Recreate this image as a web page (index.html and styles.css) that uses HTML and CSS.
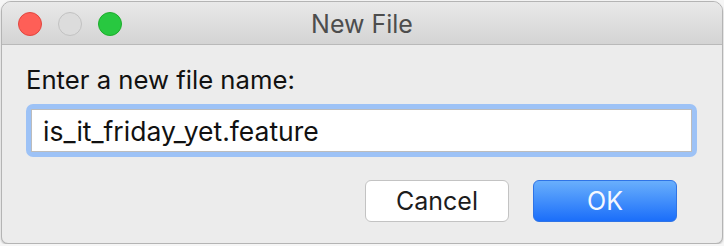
FILE: index.html
```html
<!DOCTYPE html>
<html lang="en">
<head>
    <meta charset="UTF-8">
    <meta name="viewport" content="width=device-width, initial-scale=1.0">
    <title>New File</title>
    <link rel="stylesheet" href="styles.css">
</head>
<body>
    <div class="window">
        <div class="titlebar">
            <div class="lights">
                <span class="light close"></span>
                <span class="light minimize"></span>
                <span class="light zoom"></span>
            </div>
            <div class="title">New File</div>
            <div></div>
        </div>
        <div class="content">
            <label for="fileName" class="prompt">Enter a new file name:</label>
            <div class="field">
                <input type="text" id="fileName" value="is_it_friday_yet.feature">
            </div>
            <div class="buttons">
                <button class="btn cancel">Cancel</button>
                <button class="btn ok">OK</button>
            </div>
        </div>
    </div>
</body>
</html>
```

FILE: styles.css
```css
body {
    margin: 0;
    background: #f6f6f6;
    font-family: Inter, 'Liberation Sans', Arial, sans-serif;
}
.window {
    margin: 1px 0 0 1px;
    width: 722px;
    height: 243px;
    box-sizing: border-box;
    border: 1px solid #b4b4b4;
    border-radius: 10px 10px 7px 7px;
    background: #ececec;
    overflow: hidden;
    box-shadow: 0 1px 2px rgba(0, 0, 0, 0.25);
}
.titlebar {
    display: grid;
    grid-template-columns: 1fr auto 1fr;
    align-items: center;
    height: 42px;
    padding: 0 16px;
    background: linear-gradient(to bottom, #e9e9e9, #d4d4d4);
    border-bottom: 1px solid #b9b9b9;
}
.lights {
    display: flex;
    gap: 16px;
    margin-top: 2px;
}
.light {
    width: 24px;
    height: 24px;
    box-sizing: border-box;
    border-radius: 50%;
    border: 1px solid;
}
.light.close {
    background: #fe5f57;
    border-color: #e2463f;
}
.light.minimize {
    background: #dcdcdc;
    border-color: #c2c2c2;
}
.light.zoom {
    background: #28c840;
    border-color: #1dad2b;
}
.title {
    color: #4d4d4d;
    font-size: 25px;
    margin-top: 2px;
}
.content {
    padding: 20px 25px 0 24px;
}
.prompt {
    display: block;
    font-size: 25.7px;
    line-height: 29px;
    color: #111;
}
.field {
    margin-top: 10px;
    padding: 5px;
    background: #9dc2f6;
    border-radius: 7px;
}
.field input {
    display: block;
    width: 100%;
    height: 43px;
    box-sizing: border-box;
    margin: 0;
    padding: 0 11px;
    border: 1px solid #bcbcbc;
    background: #fff;
    font-family: inherit;
    font-size: 26.5px;
    color: #111;
    outline: none;
}
.buttons {
    display: flex;
    justify-content: flex-end;
    gap: 24px;
    margin-top: 23px;
    padding-right: 20px;
}
.btn {
    width: 144px;
    height: 42px;
    box-sizing: border-box;
    border-radius: 6px;
    font-family: inherit;
    font-size: 25px;
    padding: 0;
}
.btn.cancel {
    background: #fff;
    border: 1px solid #c3c3c3;
    color: #1c1c1c;
}
.btn.ok {
    background: linear-gradient(to bottom, #69affc, #1b6efa);
    border: 1px solid #2f74e6;
    color: #f5f8ff;
}
```
